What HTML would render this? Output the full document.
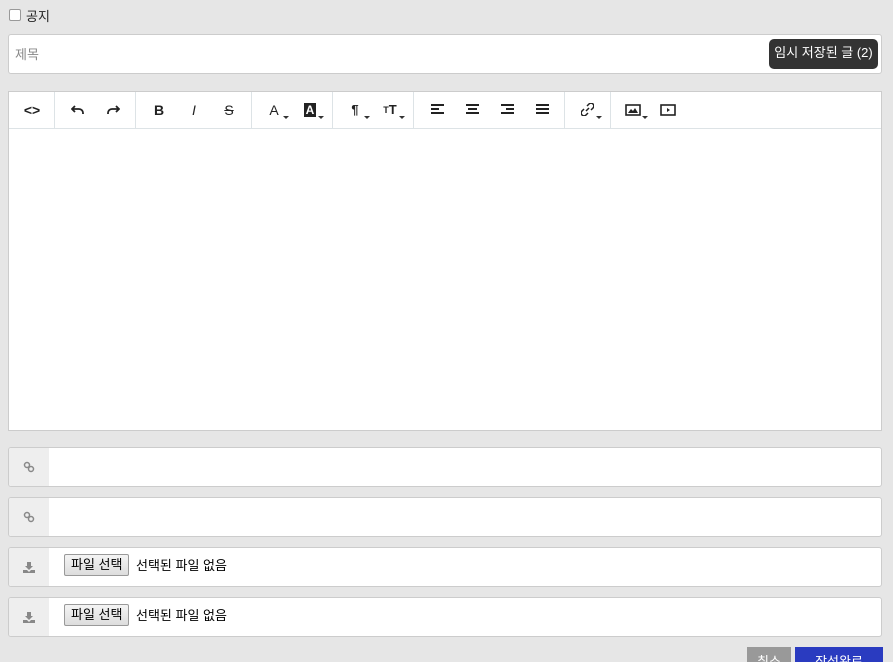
<!DOCTYPE html><html><head><meta charset="utf-8"><style>
html{overflow:hidden;height:662px}
body{margin:0;width:893px;height:662px;background:#e6e6e6;font-family:"Liberation Sans","Noto Sans CJK KR",sans-serif;position:relative;overflow:hidden;font-size:13px}
.abs{position:absolute}
.box{position:absolute;left:8px;width:872px;background:#fff;border:1px solid #ccc;border-radius:3px}
.ic{position:absolute;top:-1px;height:37px;display:flex;align-items:center;justify-content:center;width:30px;margin-left:-15px;font-weight:bold;font-size:14px;color:#222}
.sep{position:absolute;top:0;width:1px;height:36px;background:#dde3e6}
.car{position:absolute;width:0;height:0;border-left:3px solid transparent;border-right:3px solid transparent;border-top:3px solid #333}
.row{position:absolute;left:8px;width:872px;height:38px;background:#fff;border:1px solid #ccc;border-radius:3px;overflow:hidden}
.row .l{position:absolute;left:0;top:0;width:40px;height:38px;background:#eee;display:flex;align-items:center;justify-content:center}
.fb{position:absolute;left:55px;top:6px;height:20px;padding:0 6px;border:1px solid #999;border-radius:2px;background:linear-gradient(#f4f4f4,#ddd);font-size:13px;line-height:19px;color:#000}
.ft{position:absolute;left:127px;top:7px;font-size:13px;color:#000}
</style></head><body>
<div class="abs" style="left:9px;top:9px;width:10px;height:10px;border:1px solid #999;border-radius:2px;background:#fff"></div>
<div class="abs" style="left:26px;top:6px;font-size:13px;color:#222">공지</div>
<div class="box" style="top:34px;height:38px">
 <div class="abs" style="left:6px;top:9px;color:#888;font-size:13px">제목</div>
 <div class="abs" style="left:760px;top:4px;width:109px;height:30px;background:#333;border-radius:5px;color:#fff;font-size:13px;line-height:28px;text-align:center">임시 저장된 글 (2)</div>
</div>
<div class="box" style="top:91px;height:338px;border-radius:0">
 <div class="abs" style="left:0;top:36px;width:872px;height:1px;background:#dde3e6"></div>
 <div class="sep" style="left:45px"></div><div class="sep" style="left:126px"></div><div class="sep" style="left:242px"></div><div class="sep" style="left:323px"></div><div class="sep" style="left:404px"></div><div class="sep" style="left:555px"></div><div class="sep" style="left:601px"></div>
 <div class="ic" style="left:23px">&lt;&gt;</div>
 <div class="ic" style="left:69px"><svg width="14" height="10"><path d="M4 1L1 4l3 3M1 4h7a4 4 0 0 1 4 4v1" fill="none" stroke="#222" stroke-width="1.8"/></svg></div>
 <div class="ic" style="left:104px"><svg width="14" height="10"><path d="M10 1l3 3-3 3M13 4H6a4 4 0 0 0-4 4v1" fill="none" stroke="#222" stroke-width="1.8"/></svg></div>
 <div class="ic" style="left:150px">B</div>
 <div class="ic" style="left:185px;font-style:italic;font-weight:normal">I</div>
 <div class="ic" style="left:220px;text-decoration:line-through;font-weight:normal">S</div>
 <div class="ic" style="left:265px;font-weight:normal">A</div><div class="car" style="left:274px;top:24px"></div>
 <div class="ic" style="left:301px"><span style="background:#222;color:#fff;padding:0 2px;font-size:12px">A</span></div><div class="car" style="left:309px;top:24px"></div>
 <div class="ic" style="left:346px;font-size:13px">¶</div><div class="car" style="left:355px;top:24px"></div>
 <div class="ic" style="left:381px;font-size:13px"><span style="font-size:9px">T</span>T</div><div class="car" style="left:390px;top:24px"></div>
 <div class="ic" style="left:428px"><svg width="13" height="11"><path d="M0 1h13M0 5h8M0 9h13" stroke="#222" stroke-width="2"/></svg></div>
 <div class="ic" style="left:463px"><svg width="13" height="11"><path d="M0 1h13M2 5h9M0 9h13" stroke="#222" stroke-width="2"/></svg></div>
 <div class="ic" style="left:498px"><svg width="13" height="11"><path d="M0 1h13M5 5h8M0 9h13" stroke="#222" stroke-width="2"/></svg></div>
 <div class="ic" style="left:533px"><svg width="13" height="11"><path d="M0 1h13M0 5h13M0 9h13" stroke="#222" stroke-width="2"/></svg></div>
 <div class="ic" style="left:578px"><svg width="13" height="13"><path d="M5 8l3-3M6 3l2-2a2.5 2.5 0 0 1 4 4l-2 2M7 10l-2 2a2.5 2.5 0 0 1-4-4l2-2" fill="none" stroke="#222" stroke-width="1.5"/></svg></div><div class="car" style="left:587px;top:24px"></div>
 <div class="ic" style="left:624px"><svg width="16" height="12"><rect x="1" y="1" width="14" height="10" fill="none" stroke="#222" stroke-width="1.6"/><path d="M3 9l3-4 2 2 2-3 3 5z" fill="#222"/></svg></div><div class="car" style="left:633px;top:24px"></div>
 <div class="ic" style="left:659px"><svg width="16" height="12"><rect x="1" y="1" width="14" height="10" fill="none" stroke="#222" stroke-width="1.6"/><path d="M7 4l3 2-3 2z" fill="#222"/></svg></div>
</div>
<div class="row" style="top:447px"><div class="l"><svg width="12" height="12"><circle cx="4" cy="4" r="2.5" fill="none" stroke="#888" stroke-width="1.5"/><circle cx="8" cy="8" r="2.5" fill="none" stroke="#888" stroke-width="1.5"/></svg></div></div>
<div class="row" style="top:497px"><div class="l"><svg width="12" height="12"><circle cx="4" cy="4" r="2.5" fill="none" stroke="#888" stroke-width="1.5"/><circle cx="8" cy="8" r="2.5" fill="none" stroke="#888" stroke-width="1.5"/></svg></div></div>
<div class="row" style="top:547px"><div class="l"><svg width="12" height="11"><path d="M4 0h4v4h2l-4 4-4-4h2z M0 8h4l2 2 2-2h4v3H0z" fill="#888"/></svg></div><div class="fb">파일 선택</div><div class="ft">선택된 파일 없음</div></div>
<div class="row" style="top:597px"><div class="l"><svg width="12" height="11"><path d="M4 0h4v4h2l-4 4-4-4h2z M0 8h4l2 2 2-2h4v3H0z" fill="#888"/></svg></div><div class="fb">파일 선택</div><div class="ft">선택된 파일 없음</div></div>
<div class="abs" style="left:747px;top:647px;width:44px;height:15px;overflow:hidden;background:#999;color:#fff;text-align:center;font-size:13px;line-height:30px">취소</div>
<div class="abs" style="left:795px;top:647px;width:88px;height:15px;overflow:hidden;background:#2a3bc0;color:#fff;text-align:center;font-size:13px;line-height:30px">작성완료</div>
</body></html>
